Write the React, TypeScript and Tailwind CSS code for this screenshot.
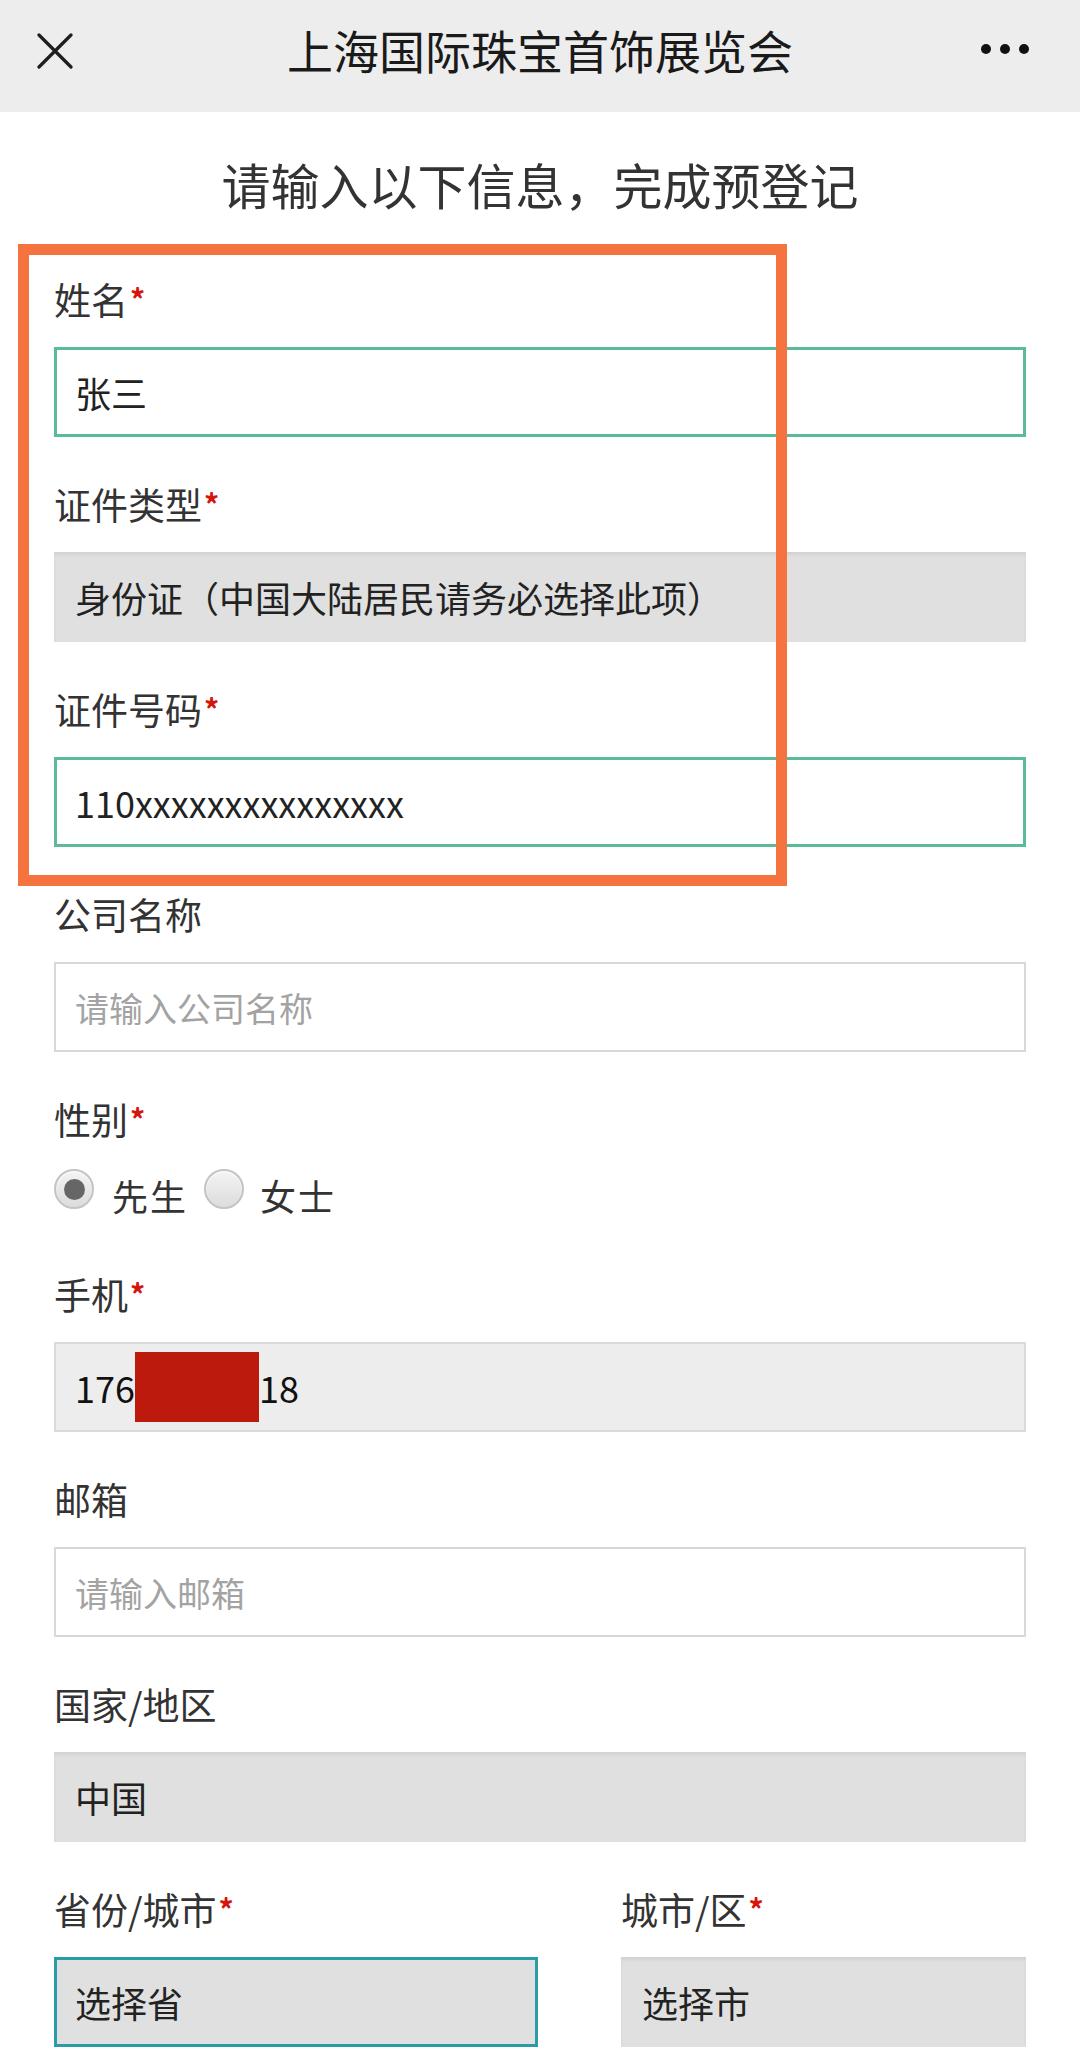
import React from "react";

const font = { fontFamily: '"Noto Sans CJK SC", "Noto Sans", sans-serif' };

function Label({ text, required }: { text: string; required?: boolean }) {
  return (
    <div className="h-[50px] text-[37px] leading-[50px] text-[#333]">
      {text}
      {required && (
        <span className="relative -top-[4px] ml-[2px] text-[30px] font-bold text-[#d4160b]">
          *
        </span>
      )}
    </div>
  );
}

function Field({
  label,
  required,
  children,
}: {
  label: string;
  required?: boolean;
  children: React.ReactNode;
}) {
  return (
    <div className="mb-[42px]">
      <Label text={label} required={required} />
      <div className="mt-[23px]">{children}</div>
    </div>
  );
}

function Radio({ checked }: { checked?: boolean }) {
  return (
    <span className="flex h-[40px] w-[40px] items-center justify-center rounded-full border-2 border-[#c4c4c4] bg-gradient-to-b from-[#f4f4f4] to-[#dcdcdc] shadow-[inset_0_1px_2px_rgba(255,255,255,0.9)]">
      {checked && <span className="h-[21px] w-[21px] rounded-full bg-[#666]" />}
    </span>
  );
}

export default function App() {
  return (
    <div className="relative min-h-[2067px] w-[1080px] bg-white" style={font}>
      {/* header */}
      <div className="relative flex h-[112px] items-center justify-center bg-[#ededed]">
        <svg
          className="absolute left-[37px] top-[33px]"
          width="36"
          height="36"
          viewBox="0 0 36 36"
        >
          <path d="M2 2 L34 34 M34 2 L2 34" stroke="#1e1e1e" strokeWidth="3.2" strokeLinecap="round" />
        </svg>
        <div className="-mt-[14px] text-[46px] leading-[60px] text-[#1a1a1a]">
          上海国际珠宝首饰展览会
        </div>
        <div className="absolute right-[51px] top-[44px] flex gap-[9px]">
          <span className="h-[10px] w-[10px] rounded-full bg-[#111]" />
          <span className="h-[10px] w-[10px] rounded-full bg-[#111]" />
          <span className="h-[10px] w-[10px] rounded-full bg-[#111]" />
        </div>
      </div>

      {/* subtitle */}
      <div className="mt-[42px] mb-[60px] text-center text-[49px] leading-[60px] text-[#333]">
        请输入以下信息，完成预登记
      </div>

      <div className="px-[54px]">
        <Field label="姓名" required>
          <div className="flex h-[90px] items-center border-[3px] border-[#5bbb97] bg-white px-[18px] text-[36px] text-[#222]">
            张三
          </div>
        </Field>

        <Field label="证件类型" required>
          <div className="flex h-[90px] items-center bg-[#e0e0e0] px-[21px] text-[36px] text-[#222] shadow-[inset_0_3px_3px_rgba(0,0,0,0.06)]">
            身份证（中国大陆居民请务必选择此项）
          </div>
        </Field>

        <Field label="证件号码" required>
          <div className="flex h-[90px] items-center border-[3px] border-[#5bbb97] bg-white px-[18px] text-[36px] text-[#222]">
            110xxxxxxxxxxxxxxx
          </div>
        </Field>

        <Field label="公司名称">
          <div className="flex h-[90px] items-center border-2 border-[#d8d8d8] bg-white px-[19px] text-[34px] text-[#a3a3a3]">
            请输入公司名称
          </div>
        </Field>

        <div className="mb-[60px]">
          <Label text="性别" required />
          <div className="mt-[25px] flex h-[40px] items-center text-[36px] text-[#333]">
            <Radio checked />
            <span className="ml-[18px] mr-[16px] pt-[12px] tracking-[2px]">先生</span>
            <Radio />
            <span className="ml-[16px] pt-[12px] tracking-[2px]">女士</span>
          </div>
        </div>

        <Field label="手机" required>
          <div className="flex h-[90px] items-center border-2 border-[#dadada] bg-[#ededed] px-[19px] text-[36px] text-[#111]">
            <span>176</span>
            <span className="h-[70px] w-[124px] bg-[#bb1a0c]" />
            <span>18</span>
          </div>
        </Field>

        <Field label="邮箱">
          <div className="flex h-[90px] items-center border-2 border-[#d8d8d8] bg-white px-[19px] text-[34px] text-[#a3a3a3]">
            请输入邮箱
          </div>
        </Field>

        <Field label="国家/地区">
          <div className="flex h-[90px] items-center bg-[#e0e0e0] px-[21px] text-[36px] text-[#222] shadow-[inset_0_3px_3px_rgba(0,0,0,0.06)]">
            中国
          </div>
        </Field>

        <div className="grid grid-cols-[484px_1fr] gap-x-[83px]">
          <div>
            <Label text="省份/城市" required />
            <div className="mt-[23px] flex h-[90px] items-center border-[3px] border-[#2a9ca6] bg-[#e0e0e0] px-[18px] text-[36px] text-[#222]">
              选择省
            </div>
          </div>
          <div>
            <Label text="城市/区" required />
            <div className="mt-[23px] flex h-[90px] items-center bg-[#e0e0e0] px-[21px] text-[36px] text-[#222] shadow-[inset_0_3px_3px_rgba(0,0,0,0.06)]">
              选择市
            </div>
          </div>
        </div>
      </div>

      {/* annotation box */}
      <div className="pointer-events-none absolute left-[18px] top-[244px] h-[642px] w-[769px] border-[11px] border-[#f4733f]" />
    </div>
  );
}
